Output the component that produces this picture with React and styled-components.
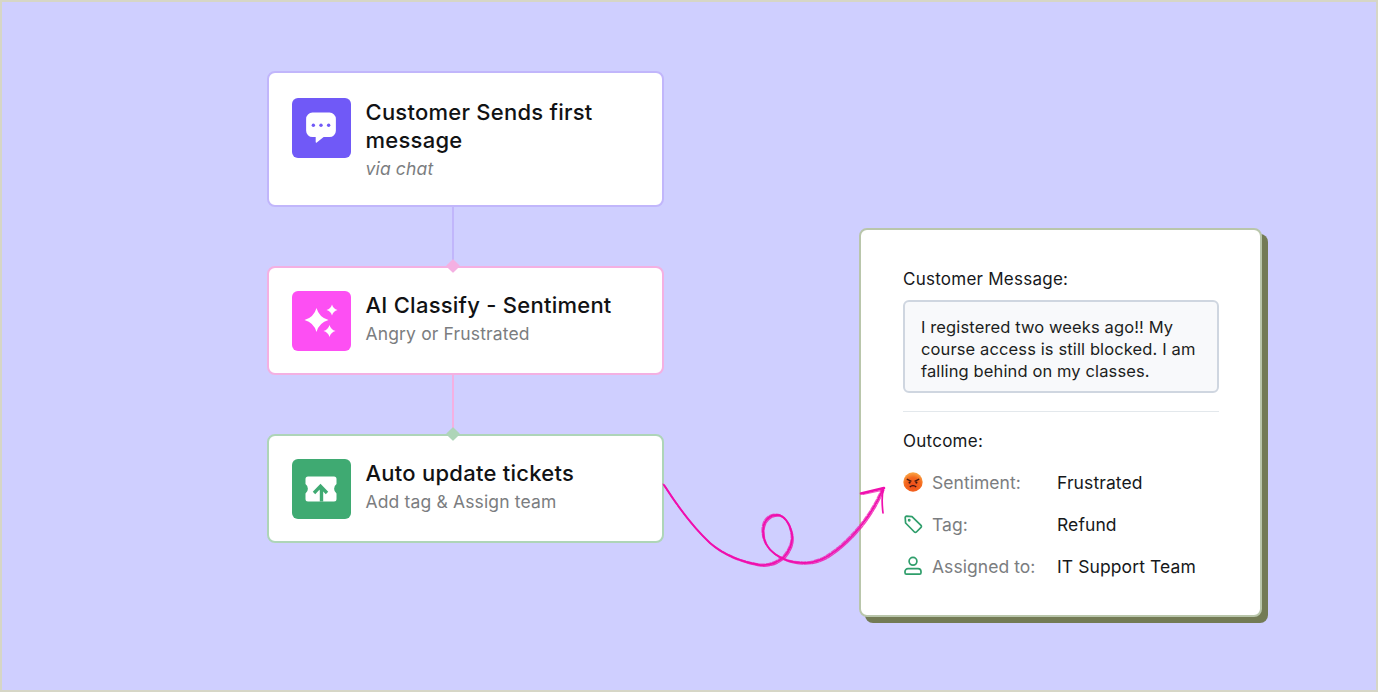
import React from "react";
import styled, { createGlobalStyle } from "styled-components";

const Global = createGlobalStyle`
  html, body { margin: 0; padding: 0; background: #cfcfff; }
  body { font-family: Inter, "Liberation Sans", sans-serif; }
`;

const Stage = styled.main`
  position: relative;
  box-sizing: border-box;
  width: 1378px;
  height: 692px;
  overflow: hidden;
  background: #cfcfff;
  border: 2px solid #d6d6c6;
  padding: 69px 0 0 264.5px;
  display: flex;
  align-items: flex-start;
`;

const Flow = styled.section`
  width: 397px;
  display: flex;
  flex-direction: column;
  align-items: stretch;
  flex: none;
`;

const StepCard = styled.article`
  box-sizing: border-box;
  height: ${(p) => p.$h}px;
  background: #fff;
  border: 2px solid ${(p) => p.$border};
  border-radius: 8px;
  padding: ${(p) => p.$top}px 24px 0 23px;
  display: flex;
  align-items: flex-start;
  gap: 15px;
`;

const IconTile = styled.div`
  width: 59px;
  height: 60px;
  flex: none;
  border-radius: 6px;
  background: ${(p) => p.$bg};
  display: flex;
  align-items: center;
  justify-content: center;
`;

const StepText = styled.div`
  display: flex;
  flex-direction: column;
`;

const StepTitle = styled.h3`
  margin: 0;
  font-size: 22px;
  line-height: 28px;
  font-weight: 550;
  letter-spacing: 0.25px;
  color: #111214;
`;

const StepSub = styled.p`
  margin: 1px 0 0;
  font-size: 17.5px;
  line-height: 28px;
  font-weight: 400;
  font-style: ${(p) => (p.$italic ? "italic" : "normal")};
  letter-spacing: 0.15px;
  color: #7b7d80;
`;

const Connector = styled.div`
  position: relative;
  height: 59px;
  padding-left: 185.5px;
`;

const Line = styled.span`
  display: block;
  width: 2px;
  height: 100%;
  background: ${(p) => p.$color};
`;

const Diamond = styled.span`
  position: absolute;
  bottom: -5px;
  left: 186.5px;
  width: 10px;
  height: 10px;
  margin-left: -5px;
  border-radius: 1px;
  transform: rotate(45deg);
  background: ${(p) => p.$color};
  z-index: 2;
`;

const Detail = styled.section`
  box-sizing: border-box;
  flex: none;
  width: 403px;
  height: 389px;
  margin: 157px 0 0 195.5px;
  padding: 37px 41px 0 42px;
  background: #fff;
  border: 2px solid #b9c6ab;
  border-radius: 8px;
  box-shadow: 6px 6px 0 0 #737b55;
  display: flex;
  flex-direction: column;
`;

const Label = styled.h4`
  margin: 0;
  font-size: 17px;
  line-height: 24px;
  font-weight: 400;
  letter-spacing: 0.25px;
  color: #16181b;
`;

const Quote = styled.blockquote`
  box-sizing: border-box;
  margin: 9px 0 0;
  height: 93px;
  padding: 14px 16px 0 16px;
  background: #f8f9fb;
  border: 2px solid #cfd6e0;
  border-radius: 6px;
  font-size: 16.5px;
  line-height: 22px;
  letter-spacing: 0.12px;
  color: #1c1e21;
`;

const Rule = styled.hr`
  width: 100%;
  height: 1px;
  border: 0;
  margin: 18px 0 17px;
  background: #e3e8ec;
`;

const Rows = styled.dl`
  margin: 17px 0 0;
  display: flex;
  flex-direction: column;
  gap: 18px;
`;

const Row = styled.div`
  height: 24px;
  display: grid;
  grid-template-columns: 20px 116px 1fr;
  gap: 0 9px;
  align-items: center;
`;

const RowIcon = styled.span`
  display: flex;
  align-items: center;
  justify-content: center;
`;

const RowKey = styled.dt`
  font-size: 17.5px;
  letter-spacing: 0.05px;
  color: #7b7d80;
`;

const RowValue = styled.dd`
  margin: 0;
  font-size: 17.5px;
  letter-spacing: 0.1px;
  color: #16181b;
`;

const Scribble = styled.svg`
  position: absolute;
  left: -2px;
  top: -2px;
  width: 1378px;
  height: 692px;
  pointer-events: none;
  z-index: 3;
`;

const ChatIcon = () => (
  <svg width="34" height="34" viewBox="-0.5 0 32 32">
    <path
      d="M7.5 1.5h16a6 6 0 0 1 6 6v11a6 6 0 0 1-6 6h-5.5l-6.5 5.2c-.5.4-1 .1-1-.5v-4.7h-3a6 6 0 0 1-6-6v-11a6 6 0 0 1 6-6z"
      fill="#fff"
    />
    <circle cx="8.3" cy="13.4" r="1.6" fill="#7059f7" />
    <circle cx="15.5" cy="13.4" r="1.6" fill="#7059f7" />
    <circle cx="22.7" cy="13.4" r="1.6" fill="#7059f7" />
  </svg>
);

const star = (cx, cy, r, w) =>
  `M${cx} ${cy - r}Q${cx + w} ${cy - w} ${cx + r} ${cy}Q${cx + w} ${cy + w} ${cx} ${cy + r}Q${cx - w} ${cy + w} ${cx - r} ${cy}Q${cx - w} ${cy - w} ${cx} ${cy - r}Z`;

const SparkIcon = () => (
  <svg width="34" height="34" viewBox="0 0 34 34">
    <path d={star(12.5, 16, 12, 2.6)} fill="#fff" />
    <path d={star(28, 6, 5.5, 1.2)} fill="#fff" />
    <path d={star(25.5, 27, 6, 1.3)} fill="#fff" />
  </svg>
);

const TicketIcon = () => (
  <svg width="32" height="26" viewBox="0 0 32 26">
    <path
      d="M3 .5h26a2.5 2.5 0 0 1 2.5 2.5v5a6 6 0 0 0 0 9.6V23a2.5 2.5 0 0 1-2.5 2.5H3A2.5 2.5 0 0 1 .5 23v-5.4a6 6 0 0 0 0-9.6V3A2.5 2.5 0 0 1 3 .5z"
      fill="#fff"
    />
    <path
      d="M16.5 25.5V15c0-1.6-.6-3-1.4-4M9 17l6.5-6.8 6.5 6.8"
      fill="none"
      stroke="#3faa72"
      strokeWidth="3.4"
    />
  </svg>
);

const AngryFace = () => (
  <svg width="20" height="20" viewBox="0 0 20 20">
    <defs>
      <radialGradient id="angry" cx="50%" cy="68%" r="68%">
        <stop offset="0%" stopColor="#ee4a1a" />
        <stop offset="60%" stopColor="#f4691f" />
        <stop offset="100%" stopColor="#fbaa48" />
      </radialGradient>
    </defs>
    <circle cx="10" cy="10" r="9.7" fill="url(#angry)" />
    <path d="M3.8 7.2 8.4 9.4M16.2 7.2 11.6 9.4" stroke="#4a1a10" strokeWidth="1.4" />
    <circle cx="6.6" cy="10.6" r="1.1" fill="#3a1510" />
    <circle cx="13.4" cy="10.6" r="1.1" fill="#3a1510" />
    <path d="M6.8 15c1.6-1.8 4.8-1.8 6.4 0" fill="none" stroke="#3a1510" strokeWidth="1.3" />
  </svg>
);

const TagIcon = () => (
  <svg width="20" height="20" viewBox="0 0 20 20" fill="none" stroke="#2f9e6b" strokeWidth="1.7" strokeLinejoin="round">
    <path d="M2.2 3.6 a1.4 1.4 0 0 1 1.4-1.4 L9 2.6 18 11.4a1.4 1.4 0 0 1 0 2L13.4 18a1.4 1.4 0 0 1-2 0L2.6 9z" />
    <circle cx="6.2" cy="6.2" r=".6" fill="#2f9e6b" />
  </svg>
);

const PersonIcon = () => (
  <svg width="20" height="20" viewBox="0 0 20 20" fill="none" stroke="#2f9e6b" strokeWidth="1.7">
    <circle cx="10" cy="5.3" r="3.9" />
    <path d="M5 12.6h10a3 3 0 0 1 3 3v1.2a1.4 1.4 0 0 1-1.4 1.4H3.4A1.4 1.4 0 0 1 2 16.8v-1.2a3 3 0 0 1 3-3z" />
  </svg>
);

const curve =
  "M664 485C680 510 694 528 710 543C724 555 742 562 760 565C770 566 778 562 784 557C790 550 793 543 792 535C790 523 784 515 777 515C768 515 763 522 763 531C763 541 768 549 775 554C783 560 793 563 804 563C812 563 820 561 828 556C838 550 850 539 860 527C869 516 877 503 883 489";

const Arrow = () => (
  <Scribble viewBox="0 0 1378 692" fill="none" stroke="#f010ae" strokeLinecap="round">
    <path d={curve} strokeWidth="1.9" />
    <path d={curve} strokeWidth="1.3" transform="translate(1 1.1)" opacity=".8" strokeDasharray="7 1.2" />
    <path d={curve} strokeWidth="1.2" transform="translate(-1 -1)" opacity=".7" strokeDasharray="5 1.5" />
    <path d="M861 493.5 884 488" strokeWidth="2.6" />
    <path d="M863 494.5 884 490" strokeWidth="1.2" opacity=".7" />
    <path d="M883.5 488C881.5 496 882 505 883 513" strokeWidth="1.7" />
  </Scribble>
);

const rows = [
  { icon: <AngryFace />, key: "Sentiment:", value: "Frustrated" },
  { icon: <TagIcon />, key: "Tag:", value: "Refund" },
  { icon: <PersonIcon />, key: "Assigned to:", value: "IT Support Team" },
];

export default function App() {
  return (
    <Stage>
      <Global />
      <Flow>
        <StepCard $h={136} $border="#c1b6fb" $top={25}>
          <IconTile $bg="#7059f7"><ChatIcon /></IconTile>
          <StepText>
            <StepTitle>Customer Sends first message</StepTitle>
            <StepSub $italic>via chat</StepSub>
          </StepText>
        </StepCard>
        <Connector>
          <Line $color="#c1b6fb" />
          <Diamond $color="#f4b0e2" />
        </Connector>
        <StepCard $h={109} $border="#f4b0e2" $top={23}>
          <IconTile $bg="#fd4ff3"><SparkIcon /></IconTile>
          <StepText>
            <StepTitle>AI Classify - Sentiment</StepTitle>
            <StepSub>Angry or Frustrated</StepSub>
          </StepText>
        </StepCard>
        <Connector>
          <Line $color="#f4b0e2" />
          <Diamond $color="#aed5b8" />
        </Connector>
        <StepCard $h={109} $border="#aed5b8" $top={23}>
          <IconTile $bg="#3faa72"><TicketIcon /></IconTile>
          <StepText>
            <StepTitle>Auto update tickets</StepTitle>
            <StepSub>Add tag &amp; Assign team</StepSub>
          </StepText>
        </StepCard>
      </Flow>
      <Detail>
        <Label>Customer Message:</Label>
        <Quote>I registered two weeks ago!! My course access is still blocked. I am falling behind on my classes.</Quote>
        <Rule />
        <Label>Outcome:</Label>
        <Rows>
          {rows.map((r) => (
            <Row key={r.key}>
              <RowIcon>{r.icon}</RowIcon>
              <RowKey>{r.key}</RowKey>
              <RowValue>{r.value}</RowValue>
            </Row>
          ))}
        </Rows>
      </Detail>
      <Arrow />
    </Stage>
  );
}
